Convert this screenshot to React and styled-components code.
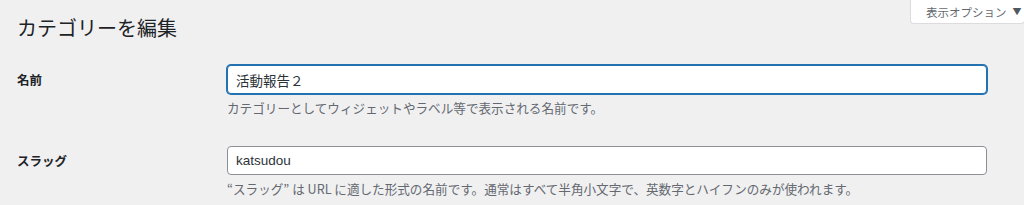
import React from 'react'
import styled, { createGlobalStyle, css } from 'styled-components'

const GlobalStyle = createGlobalStyle`
  html, body {
    margin: 0;
    padding: 0;
    background: #f0f0f1;
    font-family: "Noto Sans", "Noto Sans CJK JP", sans-serif;
    color: #1d2327;
  }
`

const Page = styled.div`
  width: 1024px;
  height: 205px;
  overflow: hidden;
  padding-left: 17px;
  box-sizing: border-box;
`

const Header = styled.div`
  display: flex;
  justify-content: space-between;
  align-items: flex-start;
`

const Title = styled.h1`
  margin: 0;
  padding-top: 13px;
  font-size: 20px;
  font-weight: 400;
  line-height: 30px;
  color: #1d2327;
  font-family: "Noto Sans CJK JP", sans-serif;
`

const ScreenOptions = styled.button`
  display: flex;
  align-items: center;
  gap: 6px;
  height: 24px;
  width: 115px;
  padding: 0 0 0 15px;
  margin-right: -1px;
  background: #fff;
  border: 1px solid #dcdcde;
  border-top: none;
  border-radius: 0 0 4px 4px;
  color: #646970;
  font-size: 11.5px;
  white-space: nowrap;
  font-family: "Noto Sans CJK JP", sans-serif;
  box-sizing: border-box;
  & > span.arrow {
    font-size: 9px;
    color: #50575e;
  }
`

const FormTable = styled.div`
  margin-top: 7px;
`

const Row = styled.div`
  display: grid;
  grid-template-columns: 210px 760px;
  padding: 15px 0 13px;
`

const Label = styled.label`
  font-size: 12.5px;
  font-weight: 700;
  line-height: 30px;
  color: #1d2327;
  font-family: "Noto Sans CJK JP", sans-serif;
`

const Input = styled.input`
  display: block;
  width: 100%;
  height: 29px;
  box-sizing: border-box;
  padding: 0 8px;
  border: 1px solid #8c8f94;
  border-radius: 4px;
  background: #fff;
  font-size: 13.5px;
  color: #2c3338;
  font-family: "Liberation Sans", "Noto Sans CJK JP", sans-serif;
  outline: none;
  ${props => props.focused && css`
    border-color: #2271b1;
    box-shadow: 0 0 0 1px #2271b1;
  `}
`

const Description = styled.p`
  margin: 4px 0 0;
  font-size: 12.6px;
  line-height: 19.5px;
  color: #646970;
  font-family: "Noto Sans CJK JP", sans-serif;
`

export default function App() {
  return (
    <Page>
      <GlobalStyle />
      <Header>
        <Title>カテゴリーを編集</Title>
        <ScreenOptions>
          表示オプション <span className="arrow">▼</span>
        </ScreenOptions>
      </Header>
      <FormTable>
        <Row>
          <Label htmlFor="name">名前</Label>
          <div>
            <Input id="name" focused defaultValue="活動報告２" />
            <Description>カテゴリーとしてウィジェットやラベル等で表示される名前です。</Description>
          </div>
        </Row>
        <Row>
          <Label htmlFor="slug">スラッグ</Label>
          <div>
            <Input id="slug" defaultValue="katsudou" />
            <Description>“スラッグ” は URL に適した形式の名前です。通常はすべて半角小文字で、英数字とハイフンのみが使われます。</Description>
          </div>
        </Row>
      </FormTable>
    </Page>
  )
}
